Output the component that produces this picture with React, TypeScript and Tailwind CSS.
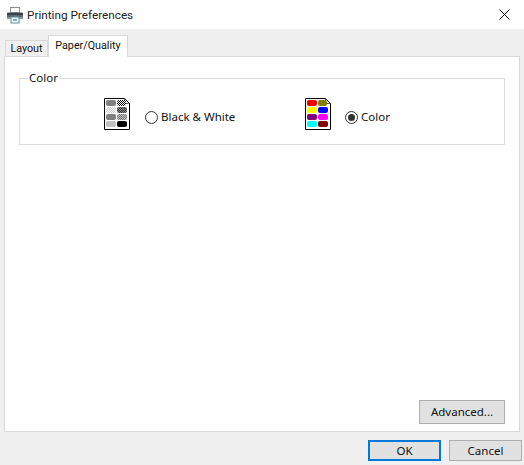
import React from "react";

function Printer() {
  return (
    <svg width="18" height="18" viewBox="0 0 18 18" className="shrink-0">
      <rect x="4.5" y="1.5" width="9" height="5" fill="#fff" stroke="#8a9096" />
      <path d="M2 6.5h14a1 1 0 0 1 1 1V13H1V7.5a1 1 0 0 1 1-1z" fill="#5e666c" />
      <rect x="1" y="7" width="16" height="2" fill="#3c4247" />
      <rect x="1" y="11" width="16" height="2" fill="#8f969b" />
      <rect x="5" y="11" width="8" height="6" fill="#fff" stroke="#4f8f9f" />
      <rect x="7" y="13" width="4" height="2" fill="#6fb2c2" />
    </svg>
  );
}

function Doc({ cells }: { cells: { fill: string; pattern?: string }[] }) {
  return (
    <svg width="26" height="32" viewBox="0 0 26 32" className="shrink-0">
      <defs>
        <pattern id="d1" width="2" height="2" patternUnits="userSpaceOnUse">
          <rect width="2" height="2" fill="#fff" />
          <rect width="1" height="1" fill="#000" />
          <rect x="1" y="1" width="1" height="1" fill="#000" />
        </pattern>
        <pattern id="d2" width="2" height="2" patternUnits="userSpaceOnUse">
          <rect width="2" height="2" fill="#c8c8c8" />
          <rect width="1" height="1" fill="#fff" />
          <rect x="1" y="1" width="1" height="1" fill="#fff" />
        </pattern>
        <pattern id="d3" width="2" height="2" patternUnits="userSpaceOnUse">
          <rect width="2" height="2" fill="#333" />
          <rect width="1" height="1" fill="#888" />
          <rect x="1" y="1" width="1" height="1" fill="#888" />
        </pattern>
        <pattern id="d4" width="2" height="2" patternUnits="userSpaceOnUse">
          <rect width="2" height="2" fill="#777" />
          <rect width="1" height="1" fill="#bbb" />
          <rect x="1" y="1" width="1" height="1" fill="#bbb" />
        </pattern>
      </defs>
      <path d="M0.5 0.5H20.5L25.5 5.5V31.5H0.5Z" fill="#fff" stroke="#000" />
      <path d="M20.5 1V5.5H25" fill="none" stroke="#555" />
      {cells.map((c, i) => {
        const col = i % 2;
        const row = Math.floor(i / 2);
        return (
          <rect
            key={i}
            x={2 + col * 11}
            y={2 + row * 7}
            width={col === 1 && row === 0 ? 9 : 10}
            height={6}
            rx={2}
            fill={c.pattern ? `url(#${c.pattern})` : c.fill}
          />
        );
      })}
    </svg>
  );
}

const bw = [
  { fill: "#808080" },
  { fill: "", pattern: "d1" },
  { fill: "", pattern: "d2" },
  { fill: "", pattern: "d3" },
  { fill: "#808080" },
  { fill: "", pattern: "d4" },
  { fill: "#c0c0c0" },
  { fill: "#000000" },
];

const colorCells = [
  { fill: "#f00000" },
  { fill: "#808000" },
  { fill: "#ffff00" },
  { fill: "#0000ff" },
  { fill: "#800080" },
  { fill: "#ff00ff" },
  { fill: "#00ffff" },
  { fill: "#800000" },
];

function Radio({ checked }: { checked?: boolean }) {
  return (
    <span className="w-[13px] h-[13px] rounded-full border border-[#333] bg-white flex items-center justify-center shrink-0">
      {checked && <span className="w-[7px] h-[7px] rounded-full bg-[#333]" />}
    </span>
  );
}

export default function App() {
  return (
    <div className="w-[524px] h-[465px] bg-[#f0f0f0] flex flex-col overflow-hidden text-[11.5px] leading-[16px] text-[#111] font-['Noto_Sans','Open_Sans',sans-serif]">
      <div className="h-[29px] bg-white flex items-center pl-[6px] pr-[14px] gap-[3px]">
        <Printer />
        <span className="text-[#222] font-['Roboto',sans-serif] text-[11.75px]">Printing Preferences</span>
        <svg width="11" height="11" viewBox="0 0 11 11" className="ml-auto">
          <path d="M0.5 0.5L10.5 10.5M10.5 0.5L0.5 10.5" stroke="#111" strokeWidth="1" />
        </svg>
      </div>

      <div className="h-[27px] flex items-end pl-[5px] relative z-10 font-['Roboto',sans-serif] text-[10.75px]">
        <div className="w-[43px] h-[16px] bg-[#f0f0f0] border border-b-0 border-[#d9d9d9] flex items-center justify-center pt-[1px]">
          Layout
        </div>
        <div className="w-[80px] h-[22px] -mb-px bg-white border border-b-0 border-[#d9d9d9] flex items-start pt-[2px] justify-center">
          Paper/Quality
        </div>
      </div>

      <div className="ml-[4px] w-[516px] h-[376px] shrink-0 bg-white border border-[#d9d9d9] flex flex-col px-[14px] pt-[14px] pb-[7px]">
        <fieldset className="h-[74px] border border-[#dcdcdc] px-[8px] flex items-start">
          <legend className="px-[1px] leading-[14px] text-[#111]">Color</legend>
          <div className="flex pl-[76px] pt-[13px]">
            <div className="flex items-center w-[201px]">
              <Doc cells={bw} />
              <div className="flex items-center pt-[6px]">
                <span className="ml-[15px] mr-[3px]"><Radio /></span>
                <span>Black &amp; White</span>
              </div>
            </div>
            <div className="flex items-center">
              <Doc cells={colorCells} />
              <div className="flex items-center pt-[6px]">
                <span className="ml-[14px] mr-[3px]"><Radio checked /></span>
                <span>Color</span>
              </div>
            </div>
          </div>
        </fieldset>
        <div className="mt-auto flex justify-end">
          <button className="w-[86px] h-[24px] bg-[#e1e1e1] border border-[#adadad] text-[#111]">Advanced...</button>
        </div>
      </div>

      <div className="flex justify-end gap-[8px] pr-[2px] pt-[8px]">
        <button className="w-[73px] h-[21px] bg-[#e1e1e1] border-2 border-[#0078d7] text-[#111]">OK</button>
        <button className="w-[73px] h-[21px] bg-[#e1e1e1] border border-[#adadad] text-[#111]">Cancel</button>
      </div>
    </div>
  );
}
